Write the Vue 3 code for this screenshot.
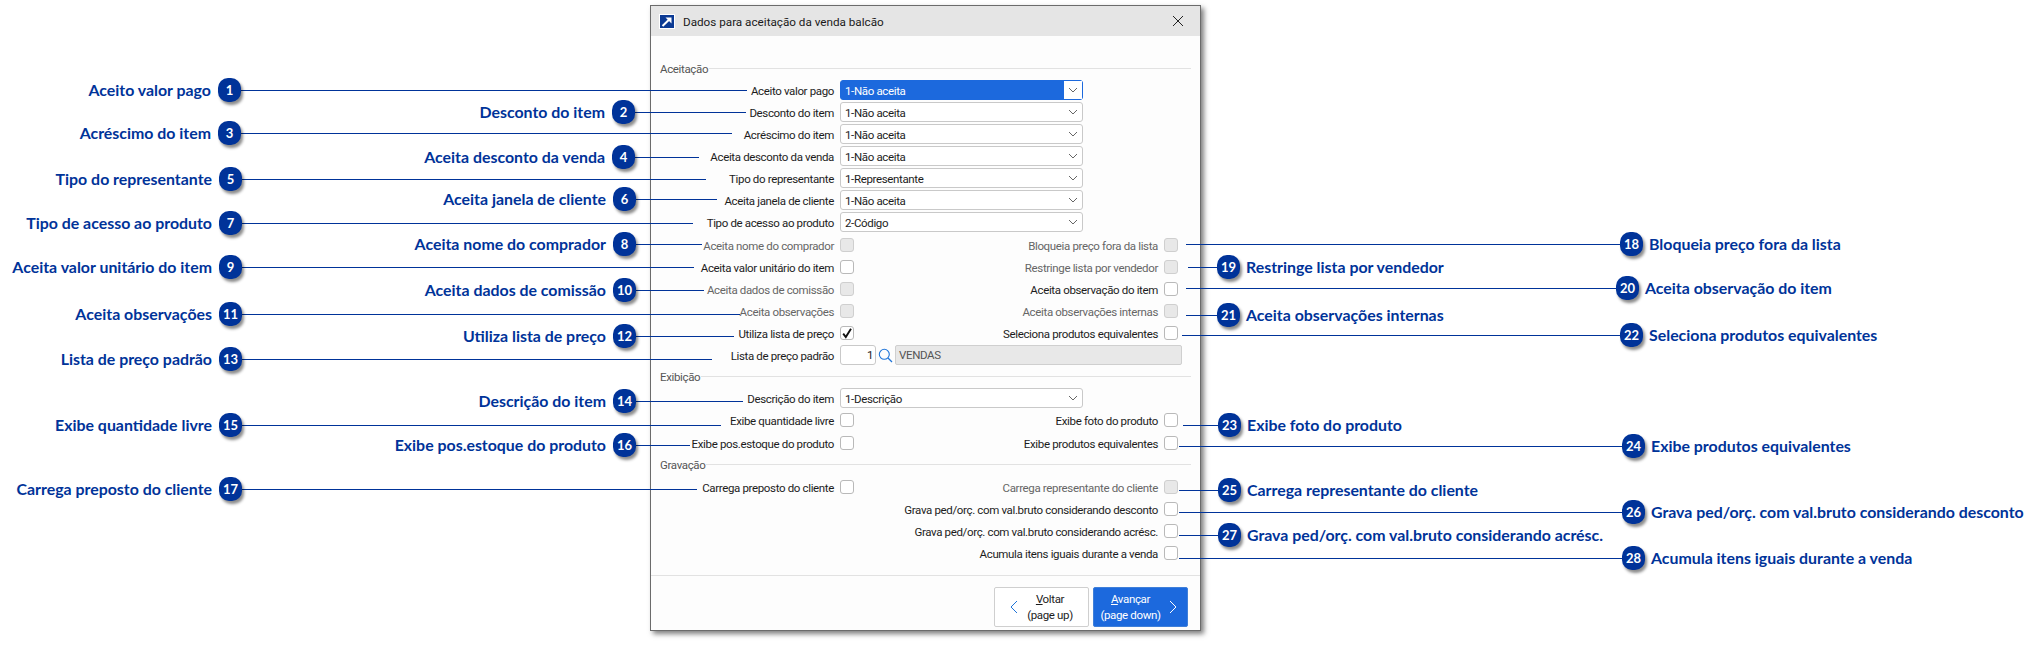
<script setup>
const yes = '1-Não aceita'
const selectsA = [
  { label: 'Aceito valor pago', value: yes, focus: true },
  { label: 'Desconto do item', value: yes },
  { label: 'Acréscimo do item', value: yes },
  { label: 'Aceita desconto da venda', value: yes },
  { label: 'Tipo do representante', value: '1-Representante' },
  { label: 'Aceita janela de cliente', value: yes },
  { label: 'Tipo de acesso ao produto', value: '2-Código' },
]
const checksA = [
  { l: 'Aceita nome do comprador', ld: true, r: 'Bloqueia preço fora da lista', rd: true },
  { l: 'Aceita valor unitário do item', r: 'Restringe lista por vendedor', rd: true },
  { l: 'Aceita dados de comissão', ld: true, r: 'Aceita observação do item' },
  { l: 'Aceita observações', ld: true, r: 'Aceita observações internas', rd: true },
  { l: 'Utiliza lista de preço', lc: true, r: 'Seleciona produtos equivalentes' },
]
const checksB = [
  { l: 'Exibe quantidade livre', r: 'Exibe foto do produto' },
  { l: 'Exibe pos.estoque do produto', r: 'Exibe produtos equivalentes', shift: true },
]
const checksC = [
  { l: 'Carrega preposto do cliente', r: 'Carrega representante do cliente', rd: true, shift: true },
  { r: 'Grava ped/orç. com val.bruto considerando desconto' },
  { r: 'Grava ped/orç. com val.bruto considerando acrésc.' },
  { r: 'Acumula itens iguais durante a venda' },
]
// Callouts: side 'l' = label left of badge, line runs right to `to`; side 'r' = label right of badge, line runs from `to`.
const raw = [
  [1, 'Aceito valor pago', 'l', 218, 90, 747],
  [2, 'Desconto do item', 'l', 612, 112, 746],
  [3, 'Acréscimo do item', 'l', 218, 133, 732],
  [4, 'Aceita desconto da venda', 'l', 612, 157, 699],
  [5, 'Tipo do representante', 'l', 219, 179, 706],
  [6, 'Aceita janela de cliente', 'l', 613, 199, 717],
  [7, 'Tipo de acesso ao produto', 'l', 219, 223, 693],
  [8, 'Aceita nome do comprador', 'l', 613, 244, 702],
  [9, 'Aceita valor unitário do item', 'l', 219, 267, 694],
  [10, 'Aceita dados de comissão', 'l', 613, 290, 704],
  [11, 'Aceita observações', 'l', 219, 314, 740],
  [12, 'Utiliza lista de preço', 'l', 613, 336, 734],
  [13, 'Lista de preço padrão', 'l', 219, 359, 712],
  [14, 'Descrição do item', 'l', 613, 401, 743],
  [15, 'Exibe quantidade livre', 'l', 219, 425, 721],
  [16, 'Exibe pos.estoque do produto', 'l', 613, 445, 690],
  [17, 'Carrega preposto do cliente', 'l', 219, 489, 697],
  [18, 'Bloqueia preço fora da lista', 'r', 1620, 244, 1186],
  [19, 'Restringe lista por vendedor', 'r', 1217, 267, 1188],
  [20, 'Aceita observação do item', 'r', 1616, 288, 1186],
  [21, 'Aceita observações internas', 'r', 1217, 315, 1186],
  [22, 'Seleciona produtos equivalentes', 'r', 1620, 335, 1182],
  [23, 'Exibe foto do produto', 'r', 1218, 425, 1183],
  [24, 'Exibe produtos equivalentes', 'r', 1622, 446, 1179],
  [25, 'Carrega representante do cliente', 'r', 1218, 490, 1179],
  [26, 'Grava ped/orç. com val.bruto considerando desconto', 'r', 1622, 512, 1179],
  [27, 'Grava ped/orç. com val.bruto considerando acrésc.', 'r', 1218, 535, 1179],
  [28, 'Acumula itens iguais durante a venda', 'r', 1622, 558, 1179],
]
const callouts = raw.map(([n, text, side, x, y, to]) => ({
  n,
  text,
  side,
  badge: { left: x + 'px', top: y - 12 + 'px' },
  line:
    side === 'l'
      ? { left: x + 23 + 'px', top: y + 'px', width: to - x - 23 + 'px' }
      : { left: to + 'px', top: y + 'px', width: x - to + 'px' },
  label:
    side === 'l'
      ? { right: 2043 - x + 7 + 'px', top: y - 11 + 'px' }
      : { left: x + 29 + 'px', top: y - 11 + 'px' },
}))
</script>

<template>
  <div class="canvas">
    <section class="dialog">
      <header class="titlebar">
        <svg class="appicon" viewBox="0 0 16 15" width="16" height="15">
          <rect x="0.5" y="0.5" width="15" height="14" fill="#0b3a94" stroke="#fff" />
          <path d="M3.5 12 L11 4.8" stroke="#fff" stroke-width="2" fill="none" />
          <path d="M6.5 3.5 H12.5 V9.5 Z" fill="#fff" />
        </svg>
        <span class="title">Dados para aceitação da venda balcão</span>
        <svg class="close" viewBox="0 0 12 12" width="12" height="12">
          <path d="M1 1 L11 11 M11 1 L1 11" stroke="#222" stroke-width="1" fill="none" />
        </svg>
      </header>

      <div class="body">
        <div class="group"><span>Aceitação</span><i></i></div>
        <div v-for="s in selectsA" :key="s.label" class="row">
          <label class="lbl">{{ s.label }}</label>
          <div class="select" :class="{ focus: s.focus }">
            <span class="val">{{ s.value }}</span>
            <span class="arrow">
              <svg viewBox="0 0 10 6" width="10" height="6"><path d="M1 1 L5 5 L9 1" stroke="#666" fill="none" /></svg>
            </span>
          </div>
        </div>
        <div v-for="(c, i) in checksA" :key="c.l" class="row" :class="{ shift: i === 0 }">
          <label class="lbl" :class="{ off: c.ld }">{{ c.l }}</label>
          <span class="cb" :class="{ dis: c.ld }">
            <svg v-if="c.lc" viewBox="0 0 12 12" width="12" height="12"><path d="M2.2 6.6 L4.8 10 L10 1.8" stroke="#111" stroke-width="1.9" fill="none" /></svg>
          </span>
          <label class="lbl" :class="{ off: c.rd }">{{ c.r }}</label>
          <span class="cb" :class="{ dis: c.rd }"></span>
        </div>
        <div class="row">
          <label class="lbl">Lista de preço padrão</label>
          <div class="lookup">
            <span class="code">1</span>
            <svg class="lens" viewBox="0 0 15 15" width="15" height="15">
              <circle cx="6.3" cy="6.3" r="5" stroke="#1f74d8" stroke-width="1.1" fill="none" />
              <path d="M10 10 L14 14" stroke="#1f74d8" stroke-width="1.3" />
            </svg>
            <span class="desc">VENDAS</span>
          </div>
        </div>

        <div class="group"><span>Exibição</span><i></i></div>
        <div class="row">
          <label class="lbl">Descrição do item</label>
          <div class="select">
            <span class="val">1-Descrição</span>
            <span class="arrow">
              <svg viewBox="0 0 10 6" width="10" height="6"><path d="M1 1 L5 5 L9 1" stroke="#666" fill="none" /></svg>
            </span>
          </div>
        </div>
        <div v-for="c in checksB" :key="c.l" class="row" :class="{ shift: c.shift }">
          <label class="lbl">{{ c.l }}</label>
          <span class="cb"></span>
          <label class="lbl">{{ c.r }}</label>
          <span class="cb"></span>
        </div>

        <div class="group"><span>Gravação</span><i></i></div>
        <div v-for="c in checksC" :key="c.r" class="row" :class="{ shift: c.shift }">
          <label class="lbl">{{ c.l }}</label>
          <span v-if="c.l" class="cb"></span>
          <span v-else></span>
          <label class="lbl" :class="{ off: c.rd }">{{ c.r }}</label>
          <span class="cb" :class="{ dis: c.rd }"></span>
        </div>
      </div>

      <footer class="footer">
        <button class="btn">
          <svg viewBox="0 0 9 14" width="9" height="14"><path d="M8 1 L2 7 L8 13" stroke="#1f74d8" fill="none" /></svg>
          <span class="btxt"><span><u>V</u>oltar</span><span>(page up)</span></span>
        </button>
        <button class="btn primary">
          <span class="btxt"><span><u>A</u>vançar</span><span>(page down)</span></span>
          <svg viewBox="0 0 9 14" width="9" height="14"><path d="M1 1 L7 7 L1 13" stroke="#fff" fill="none" /></svg>
        </button>
      </footer>
    </section>

    <template v-for="c in callouts" :key="c.n">
      <i class="line" :style="c.line"></i>
      <b class="badge" :style="c.badge">{{ c.n }}</b>
      <span class="note" :style="c.label">{{ c.text }}</span>
    </template>
  </div>
</template>

<style scoped>
.canvas {
  position: relative;
  width: 2043px;
  height: 647px;
  overflow: hidden;
  background: #fff;
  font-family: Roboto, "Liberation Sans", sans-serif;
}
.dialog {
  position: absolute;
  left: 650px;
  top: 5px;
  width: 551px;
  height: 626px;
  box-sizing: border-box;
  display: flex;
  flex-direction: column;
  background: #fdfdfd;
  border: 1px solid #6b6b6b;
  box-shadow: 3px 3px 5px rgba(0, 0, 0, 0.5);
}
.titlebar {
  height: 30px;
  flex: none;
  display: flex;
  align-items: center;
  padding: 0 16px 0 8px;
  background: #e5e5e5;
}
.appicon { flex: none; }
.title {
  margin-left: 8px;
  font-size: 11.7px;
  color: #1a1a1a;
  flex: 1;
  padding-top: 1px;
}
.body {
  flex: 1;
  padding-top: 22px;
}
.group {
  height: 21px;
  display: flex;
  align-items: center;
  padding: 0 9px;
  font-size: 11.5px;
  letter-spacing: -0.35px;
  color: #555;
}
.group span { padding: 1px 1px 0 0; }
.group i {
  flex: 1;
  height: 1px;
  background: #e2e2e2;
}
.row {
  height: 22px;
  display: grid;
  grid-template-columns: 183px 14px 298px 14px;
  column-gap: 6px;
  align-items: center;
  font-size: 11.5px;
  letter-spacing: -0.35px;
  color: #1c1c1c;
}
.shift { margin-top: 1px; }
.lbl {
  text-align: right;
  white-space: nowrap;
  padding-top: 1px;
}
.off { color: #666; }
.select {
  grid-column: 2 / -1;
  width: 243px;
  height: 20px;
  box-sizing: border-box;
  display: flex;
  align-items: center;
  border: 1px solid #c9c9c9;
  border-radius: 3px;
  background: #fff;
}
.val {
  flex: 1;
  padding: 1px 0 0 4px;
}
.arrow {
  width: 18px;
  align-self: stretch;
  display: flex;
  align-items: center;
  justify-content: center;
}
.focus {
  border-color: #1c69dd;
  background: #1c69dd;
  color: #fff;
}
.focus .arrow { background: #fff; }
.cb {
  width: 14px;
  height: 14px;
  box-sizing: border-box;
  display: flex;
  align-items: center;
  justify-content: center;
  border: 1px solid #b9b9b9;
  border-radius: 3px;
  background: #fff;
}
.dis {
  background: #e8e8e8;
  border-color: #cfcfcf;
}
.lookup {
  grid-column: 2 / -1;
  display: flex;
  align-items: center;
  width: 342px;
}
.code {
  width: 36px;
  height: 20px;
  box-sizing: border-box;
  border: 1px solid #c9c9c9;
  border-radius: 3px;
  background: #fff;
  text-align: right;
  padding-right: 2px;
  line-height: 19px;
}
.lens { margin: 0 2px; flex: none; }
.desc {
  flex: 1;
  height: 20px;
  box-sizing: border-box;
  border: 1px solid #cfcfcf;
  border-radius: 2px;
  background: #e8e8e8;
  padding-left: 3px;
  line-height: 19px;
  color: #555;
}
.footer {
  flex: none;
  height: 55px;
  box-sizing: border-box;
  border-top: 1px solid #e2e2e2;
  display: flex;
  justify-content: flex-end;
  align-items: flex-start;
  gap: 4px;
  padding: 11px 12px 0 0;
}
.btn {
  width: 95px;
  height: 40px;
  box-sizing: border-box;
  display: flex;
  align-items: center;
  padding: 0 6px 0 14px;
  border: 1px solid #cfcfcf;
  border-radius: 2px;
  background: #fff;
  color: #1c1c1c;
  font: inherit;
  font-size: 11.5px;
  letter-spacing: -0.35px;
}
.primary {
  background: #1c69dd;
  border-color: #3f7fd9;
  color: #fff;
  padding: 0 9px 0 4px;
}
.primary .btxt { padding-right: 6px; }
.btxt {
  display: flex;
  flex-direction: column;
  align-items: center;
  line-height: 16px;
  flex: 1;
  white-space: nowrap;
}
.line {
  position: absolute;
  height: 1px;
  background: #003399;
}
.badge {
  position: absolute;
  width: 23px;
  height: 24px;
  border-radius: 10px;
  background: #003399;
  color: #fff;
  font: bold 13px/24px Lato, sans-serif;
  text-align: center;
  box-shadow: 2px 3px 3px rgba(0, 0, 0, 0.45);
}
.note {
  position: absolute;
  font: bold 15.9px/22px Lato, sans-serif;
  color: #003399;
  white-space: nowrap;
}
</style>
